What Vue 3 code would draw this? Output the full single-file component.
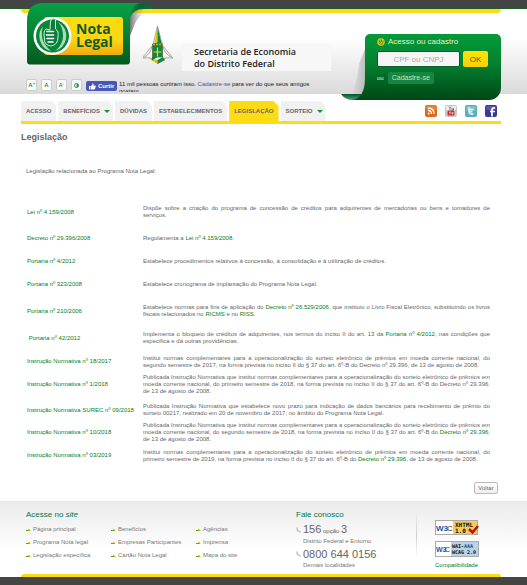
<script setup>
const textTools = [
  { label: 'A⁺', name: 'Aumentar texto' },
  { label: 'A', name: 'Texto normal' },
  { label: 'A⁻', name: 'Diminuir texto', small: true },
]

const tabs = [
  { label: 'ACESSO' },
  { label: 'BENEFÍCIOS', menu: true },
  { label: 'DÚVIDAS' },
  { label: 'ESTABELECIMENTOS' },
  { label: 'LEGISLAÇÃO', active: true },
  { label: 'SORTEIO', menu: true },
]

const t = (text) => ({ text })
const a = (text) => ({ text, link: true })

const rows = [
  { title: 'Lei nº 4.159/2008', size: 'tall', parts: [t('Dispõe sobre a criação do programa de concessão de créditos para adquirentes de mercadorias ou bens e tomadores de serviços.')] },
  { title: 'Decreto nº 29.396/2008', parts: [t('Regulamenta a '), a('Lei nº 4.159/2008.')] },
  { title: 'Portaria nº 4/2012', parts: [t('Estabelece procedimentos relativos à concessão, à consolidação e à utilização de créditos.')] },
  { title: 'Portaria nº 323/2008', parts: [t('Estabelece cronograma de implantação do Programa Nota Legal.')] },
  { title: 'Portaria nº 210/2006', size: 'tall', parts: [t('Estabelece normas para fins de aplicação do '), a('Decreto nº 26.529/2006'), t(', que instituiu o Livro Fiscal Eletrônico, substituindo os livros fiscais relacionados no '), a('RICMS'), t(' e no '), a('RISS.')] },
  { title: '\u00a0Portaria nº 42/2012', size: 'medium', parts: [t('Implementa o bloqueio de créditos de adquirentes, nos termos do inciso II do art. 13 da '), a('Portaria nº 4/2012'), t(', nas condições que especifica e dá outras providências.')] },
  { title: 'Instrução Normativa nº 18/2017', parts: [t('Institui normas complementares para a operacionalização do sorteio eletrônico de prêmios em moeda corrente nacional, do segundo semestre de 2017, na forma prevista no inciso II do § 37 do art. 6º-B do Decreto nº 29.396, de 13 de agosto de 2008.')] },
  { title: 'Instrução Normativa nº 1/2018', parts: [t('Publicada Instrução Normativa que institui normas complementares para a operacionalização do sorteio eletrônico de prêmios em moeda corrente nacional, do primeiro semestre de 2018, na forma prevista no inciso II do § 37 do art. 6º-B do Decreto nº 29.396, de 13 de agosto de 2008.')] },
  { title: 'Instrução Normativa SUREC nº 09/2018', size: 'spaced', parts: [t('Publicada Instrução Normativa que estabelece novo prazo para indicação de dados bancários para recebimento de prêmio do sorteio 00217, realizado em 20 de novembro de 2017, no âmbito do Programa Nota Legal.')] },
  { title: 'Instrução Normativa nº 10/2018', parts: [t('Publicada Instrução Normativa que institui normas complementares para a operacionalização do sorteio eletrônico de prêmios em moeda corrente nacional, do segundo semestre de 2018, na forma prevista no inciso II do § 37 do art. 6º-B do '), a('Decreto nº 29.396'), t(', de 13 de agosto de 2008.')] },
  { title: 'Instrução Normativa nº 03/2019', parts: [t('Institui normas complementares para a operacionalização do sorteio eletrônico de prêmios em moeda corrente nacional, do primeiro semestre de 2019, na forma prevista no inciso II do § 37 do art. 6º-B do '), a('Decreto nº 29.396'), t(', de 13 de agosto de 2008.')] },
]

const siteLinks = [
  'Página principal', 'Benefícios', 'Agências',
  'Programa Nota legal', 'Empresas Participantes', 'Imprensa',
  'Legislação específica', 'Cartão Nota Legal', 'Mapa do site',
]
</script>

<template>
  <div class="page">
    <header class="header">
      <div class="wrap header-inner">
        <div class="stripe"></div>
        <div class="identity">
          <div class="brand-row">
            <a href="#" class="logo" aria-label="Nota Legal">
              <svg width="133" height="62" viewBox="21 3 133 62">
                <defs>
                  <linearGradient id="panel" x1="0" y1="0" x2="0" y2="1">
                    <stop offset="0" stop-color="#06a044" />
                    <stop offset=".45" stop-color="#058538" />
                    <stop offset="1" stop-color="#025a1c" />
                  </linearGradient>
                  <linearGradient id="curl" x1="0" y1="0" x2="1" y2="0">
                    <stop offset="0" stop-color="#0aa04a" />
                    <stop offset=".5" stop-color="#04652f" />
                    <stop offset="1" stop-color="#0b6a40" />
                  </linearGradient>
                  <linearGradient id="gold" x1="0" y1="0" x2="0" y2="1">
                    <stop offset="0" stop-color="#fddc12" />
                    <stop offset=".6" stop-color="#fcd514" />
                    <stop offset="1" stop-color="#f0ab0c" />
                  </linearGradient>
                  <linearGradient id="shade" x1="0" y1="0" x2="1" y2="0">
                    <stop offset="0" stop-color="#555" stop-opacity=".8" />
                    <stop offset="1" stop-color="#bbb" stop-opacity="0" />
                  </linearGradient>
                </defs>
                <path d="M130 36V14Q134 9 146 9L146 13Q138 15 134 26Z" fill="url(#shade)" />
                <path d="M126 3H141Q149 3 153 9H144Q133 9 130 18Z" fill="url(#curl)" />
                <path d="M27 21Q27 3 43 3H141Q131 4 130 18V61Q130 64.500 127 64.500H30Q27 64.500 27 61Z" fill="url(#panel)" />
                <rect x="44" y="17" width="79" height="38" rx="3" fill="url(#gold)" />
                <circle cx="52.500" cy="36" r="19" fill="#fff" />
                <circle cx="52.500" cy="36" r="16.500" fill="#07863a" />
                <path d="M43 26Q36 35 42 45Q45 50 51 51Q43 44 42 37Q41 31 43 26Z" fill="#a9dbb8" />
                <path d="M58 22Q68 28 66 39Q64 48 55 51Q63 45 63 36Q63 27 58 22Z" fill="#a9dbb8" />
                <path d="M50 30L50.500 21Q53 17 55.500 20V29Q59 31 58 37Q58 45 51 46Q44 45 44.500 39Q43 31 46 29Z" fill="#0b7d3b" stroke="#d5eddc" stroke-width="1" />
                <path d="M47 31.500H53.500M46.500 35H53.500M47 38.500H53.500M48 42H53" stroke="#fff" stroke-width="1.600" stroke-linecap="round" />
                <text x="76" y="34" class="logo-text">Nota</text>
                <text x="76" y="47" class="logo-text">Legal</text>
              </svg>
            </a>
            <svg class="crest" width="32" height="38" viewBox="0 0 32 38" aria-hidden="true">
              <path d="M15.500 0L12 19H15.500Z" fill="#e9c512" />
              <path d="M15.500 0L20 19H15.500Z" fill="#0c8a3c" />
              <path d="M15.500 0L11 19M15.500 0L20.500 19" stroke="#888" stroke-width=".7" />
              <path d="M10 20Q9 28 1 32Q8 31 11 33M21 20Q22 28 31 32Q24 31 20 33M10 20L1 31M21 20L30 31" fill="none" stroke="#999" stroke-width=".8" />
              <path d="M10.500 18Q15.500 16 20.500 18V31H10.500Z" fill="#0a8a40" stroke="#5d6b55" stroke-width=".8" />
              <path d="M11 18.500H20.500" stroke="#c9a92c" stroke-width="1.500" stroke-dasharray="2 1" />
              <path d="M15.500 21.500V30.500M11.500 26H19.500" stroke="#f5d722" stroke-width="1.200" />
              <path d="M6 32L15.500 34L15.500 38Z" fill="#e1b918" />
              <path d="M15.500 34L25 32L15.500 38Z" fill="#e1b918" />
              <path d="M10 31H15.500L10 34.500ZM15.500 38V34L21 31L23 34Z" fill="#0a8a40" />
            </svg>
            <div class="department">Secretaria de Economia<br />do Distrito Federal</div>
          </div>
          <div class="tools">
            <button v-for="tool in textTools" :key="tool.name" type="button" class="tool" :class="{ small: tool.small }" :aria-label="tool.name">{{ tool.label }}</button>
            <button type="button" class="tool" aria-label="Contraste">
              <svg width="5" height="5" viewBox="0 0 10 10" aria-hidden="true"><circle cx="5" cy="5" r="4" fill="#fff" stroke="#2b9a50" stroke-width="2" /><path d="M5 1A4 4 0 0 1 5 9Z" fill="#2b9a50" /></svg>
            </button>
            <button type="button" class="like">
              <svg width="7" height="7" viewBox="0 0 14 14" aria-hidden="true"><path d="M0 6H3V13H0ZM4 6L7 3V0Q10 0 9 5H13Q14 7 13 8L12 12Q11 13 9 13H4Z" fill="#fff" /></svg>
              Curtir
            </button>
            <p class="like-text">11 mil pessoas curtiram isso. <a href="#">Cadastre-se</a> para ver do que seus amigos gostam.</p>
          </div>
        </div>
        <div class="login">
          <svg class="login-fold" width="24" height="66" viewBox="0 0 24 66" aria-hidden="true">
            <defs>
              <linearGradient id="foldshade" x1="0" y1="0" x2="1" y2="0">
                <stop offset="0" stop-color="#aaa" stop-opacity="0" />
                <stop offset="1" stop-color="#aaa" stop-opacity=".7" />
              </linearGradient>
              <linearGradient id="foldpanel" gradientUnits="userSpaceOnUse" x1="0" y1="0" x2="0" y2="66">
                <stop offset="0" stop-color="#039a3a" />
                <stop offset=".45" stop-color="#03812f" />
                <stop offset="1" stop-color="#004717" />
              </linearGradient>
              <linearGradient id="foldback" x1="0" y1="0" x2="0" y2="1">
                <stop offset="0" stop-color="#02542c" />
                <stop offset="1" stop-color="#4fa173" />
              </linearGradient>
            </defs>
            <path d="M24 15V60H10Q16 50 18 30Z" fill="url(#foldshade)" />
            <path d="M0 60H20V66H12Q4 66 0 60Z" fill="url(#foldback)" />
            <path d="M24 44V66H11Q24 64 24 44Z" fill="url(#foldpanel)" />
          </svg>
          <form class="login-panel" @submit.prevent>
            <label for="cpf" class="login-title">
              <svg width="8" height="8" viewBox="0 0 16 16" aria-hidden="true"><circle cx="8" cy="8" r="7.500" fill="#d8cc1a" /><path d="M4 5Q3 9 7 13M6 3V8L9 11M9 3V8M12 5V9Q12 12 9 13" fill="none" stroke="#44731a" stroke-width="1.500" /></svg>
              Acesso ou cadastro
            </label>
            <div class="login-row">
              <input id="cpf" type="text" placeholder="CPF ou CNPJ" />
              <button type="submit" class="ok">OK</button>
            </div>
            <div class="register-row">ou <a href="#" class="register">Cadastre-se</a></div>
          </form>
        </div>
      </div>
    </header>

    <div class="wrap nav-row">
      <nav class="tabs">
        <a v-for="tab in tabs" :key="tab.label" href="#" class="tab" :class="{ active: tab.active, menu: tab.menu }">
          {{ tab.label }}<span v-if="tab.menu" class="caret"></span>
        </a>
      </nav>
      <div class="social">
        <a href="#" aria-label="RSS">
          <svg width="12" height="12" viewBox="0 0 12 12"><rect width="12" height="12" rx="2" fill="#df6916" /><rect x=".5" y=".5" width="11" height="5" rx="2" fill="#ee9554" opacity=".6" /><circle cx="3.700" cy="8.500" r="1" fill="#fff" /><path d="M3 5.500Q6.500 5.500 6.500 9M3 3Q9 3 9 9" fill="none" stroke="#fff" stroke-width="1.300" /></svg>
        </a>
        <a href="#" aria-label="YouTube">
          <svg width="12" height="12" viewBox="0 0 12 12"><rect width="12" height="12" rx="2" fill="#c9c9c9" /><rect x="1" y="1" width="10" height="4" rx="1" fill="#eee" /><path d="M4 1.500L5 3V5M6 1.500L5 3M7 3V5H8.500V3" fill="none" stroke="#555" stroke-width=".7" /><rect x="2.500" y="5.500" width="7" height="5" rx="1.500" fill="#cc2630" /><path d="M4 7H6M5 7V9.500M7 7V9H8V7" fill="none" stroke="#fff" stroke-width=".6" /></svg>
        </a>
        <a href="#" aria-label="Twitter">
          <svg width="12" height="12" viewBox="0 0 12 12"><rect width="12" height="12" rx="2" fill="#58aeb9" /><rect x="1" y="1" width="10" height="5" rx="2" fill="#8ccdd4" opacity=".6" /><path d="M4 2.500V7.500Q4 9 6 9H8M4 4.500H8M4 6.800H7" fill="none" stroke="#fff" stroke-width="1.300" stroke-linecap="round" /></svg>
        </a>
        <a href="#" aria-label="Facebook">
          <svg width="12" height="12" viewBox="0 0 12 12"><rect width="12" height="12" rx="2" fill="#3d3990" /><rect x="1" y="1" width="10" height="4" rx="2" fill="#6f6cb4" opacity=".6" /><path d="M7 11.500V5Q7 2.500 10 3M5 6.500H10" fill="none" stroke="#fff" stroke-width="1.700" /></svg>
        </a>
      </div>
    </div>

    <main class="wrap">
      <h1>Legislação</h1>
      <p class="intro">Legislação relacionada ao Programa Nota Legal:</p>
      <table class="laws">
        <tbody>
          <tr v-for="row in rows" :key="row.title" :class="row.size">
            <th scope="row"><a href="#">{{ row.title }}</a></th>
            <td><template v-for="(part, i) in row.parts" :key="i"><a v-if="part.link" href="#">{{ part.text }}</a><template v-else>{{ part.text }}</template></template></td>
          </tr>
        </tbody>
      </table>
      <div class="back"><button type="button">Voltar</button></div>
    </main>

    <footer class="footer">
      <div class="wrap footer-inner">
        <section class="site">
          <h2>Acesse no <em>site</em></h2>
          <ul>
            <li v-for="link in siteLinks" :key="link">
              <svg width="5" height="4" viewBox="0 0 5 4" aria-hidden="true"><path d="M0 2.500H4" stroke="#4ea32a" /><path d="M2 0.500L5 2.500H2Z" fill="#d5c400" /></svg>
              <a href="#">{{ link }}</a>
            </li>
          </ul>
        </section>
        <section class="contact">
          <h2>Fale conosco</h2>
          <dl>
            <dt><svg width="5" height="6" viewBox="0 0 5 6" aria-hidden="true"><path d="M1 0.500Q0.500 4 4.500 5" fill="none" stroke="#bbb" stroke-width="1.300" /></svg><span>156<small> opção </small>3</span></dt>
            <dd>Distrito Federal e Entorno</dd>
            <dt><svg width="5" height="6" viewBox="0 0 5 6" aria-hidden="true"><path d="M1 0.500Q0.500 4 4.500 5" fill="none" stroke="#bbb" stroke-width="1.300" /></svg>0800 644 0156</dt>
            <dd>Demais localidades</dd>
          </dl>
        </section>
        <div class="divider"></div>
        <section class="badges">
          <a href="#" aria-label="W3C XHTML 1.0">
            <svg width="45" height="16" viewBox="0 0 45 16">
              <rect x=".5" y=".5" width="42" height="14" fill="#fff" stroke="#aaa" />
              <rect x="18" y="1" width="24" height="13" fill="#f9cb55" />
              <text x="1" y="11" class="w3">W3</text><text x="12" y="11" class="w3 dark">C</text>
              <text x="20" y="7" class="spec">XHTML</text>
              <text x="20" y="13" class="spec">1.0</text>
              <path d="M34 9L37.500 12.500L43 6" fill="none" stroke="#b81616" stroke-width="2.500" />
            </svg>
          </a>
          <a href="#" aria-label="W3C WAI-AAA WCAG 2.0">
            <svg width="45" height="16" viewBox="0 0 45 16">
              <rect x=".5" y=".5" width="43" height="15" fill="#fff" stroke="#aaa" />
              <rect x="16" y="1" width="27" height="14" fill="#b8d3e6" />
              <text x="1" y="11" class="w3 narrow">W3</text><text x="10" y="11" class="w3 narrow dark">C</text>
              <text x="17" y="7" class="spec narrow">WAI-<tspan fill="#124b93">AAA</tspan></text>
              <text x="17" y="13" class="spec narrow">WCAG 2.0</text>
            </svg>
          </a>
          <a href="#" class="compat">Compatibilidade</a>
        </section>
      </div>
      <div class="wrap"><div class="bottom-stripe"></div></div>
      <div class="bottom-bar"></div>
    </footer>
  </div>
</template>

<style>
body {
  margin: 0;
  background: #fff;
}
</style>

<style scoped>
.page {
  font: 6px/7px "Liberation Sans", Arial, sans-serif;
  color: #666;
}
.wrap {
  padding: 0 26px 0 21px;
}
a {
  color: #00801a;
  text-decoration: none;
}
button,
input {
  font-family: inherit;
  box-sizing: border-box;
}
h1, h2, p, ul, dl, dd {
  margin: 0;
  padding: 0;
}
svg {
  display: block;
  flex: none;
}

.header {
  background:
    linear-gradient(#444 0 8px, #1c5c26 8px 9px, transparent 9px) 0 0 / 100% 9px no-repeat,
    linear-gradient(#fff 0 40%, #dadada) 0 0 / 100% 94px no-repeat;
}
.header-inner {
  position: relative;
  display: flex;
  justify-content: space-between;
}
.stripe {
  position: absolute;
  top: 9px;
  left: 21px;
  right: 26px;
  height: 4px;
  background: #fddc14;
  border-radius: 0 0 4px 4px;
}
.identity {
  position: relative;
  padding-top: 3px;
}
.brand-row {
  display: flex;
}
.logo-text {
  font: 700 14px "Open Sans", sans-serif;
  fill: #115b24;
}
.crest {
  margin: 23px 0 0 -12px;
}
.department {
  box-sizing: border-box;
  width: 149px;
  height: 27px;
  margin: 41px 0 0 8px;
  padding: 2px 12px;
  background: #f7f7f7;
  color: #222;
  font: 600 9px/12px "Open Sans", sans-serif;
  white-space: nowrap;
}
.tools {
  display: flex;
  gap: 4px;
  padding: 8px 0 0 5px;
}
.tool {
  display: flex;
  align-items: center;
  justify-content: center;
  width: 11px;
  height: 12px;
  padding: 0;
  border: 1px solid #ccc;
  border-radius: 2px;
  background: #fafafa;
  color: #2b9a50;
  font-size: 6px;
  font-weight: bold;
  line-height: 8px;
}
.tool.small {
  font-size: 5px;
}
.like {
  display: flex;
  align-items: center;
  gap: 2px;
  width: 31px;
  height: 10px;
  margin-top: 2px;
  padding: 0 3px;
  border: 0;
  border-radius: 2px;
  background: #4a55b5;
  color: #fff;
  font-size: 6px;
  font-weight: bold;
  line-height: 8px;
}
.like-text {
  box-sizing: border-box;
  width: 200px;
  height: 13px;
  margin-left: -2px;
  padding-top: 2px;
  overflow: hidden;
  color: #222;
}
.like-text a {
  color: #4a52a8;
}

.login {
  display: flex;
  position: relative;
  margin-top: 34px;
  padding-bottom: 1px;
}
.login-panel {
  box-sizing: border-box;
  width: 136px;
  height: 66px;
  padding: 3px 12px 0;
  border-radius: 5px 5px 12px 0;
  background: linear-gradient(#039a3a, #03812f 45%, #004717);
}
.login-title {
  display: flex;
  align-items: center;
  gap: 3px;
  height: 9px;
  color: #e3f1c8;
  font-size: 8px;
}
.login-row {
  display: flex;
  gap: 3px;
  margin-top: 5px;
}
.login input {
  width: 83px;
  height: 16px;
  padding: 0 2px;
  border: 1px solid #0a5b26;
  border-radius: 2px;
  background: #f5f5f5;
  font-size: 8px;
  text-align: center;
}
.login input::placeholder {
  color: #aaa;
}
.ok {
  width: 25px;
  height: 16px;
  padding: 0;
  border: 0;
  border-radius: 2px;
  background: linear-gradient(#fde400, #fbce0a);
  color: #3d6b13;
  font-size: 8px;
}
.register-row {
  display: flex;
  align-items: center;
  gap: 4px;
  margin-top: 5px;
  color: #e0f0e0;
}
.register {
  padding: 2px 4px;
  border-radius: 2px;
  background: #178545;
  color: #c3e9a9;
  font-size: 7px;
  line-height: 8px;
}

.nav-row {
  display: flex;
  justify-content: space-between;
  background: linear-gradient(#fddc14, #fddc14) 21px 100% / calc(100% - 47px) 3px no-repeat;
  padding-bottom: 3px;
}
.tabs {
  display: flex;
  gap: 2px;
}
.tab {
  display: flex;
  align-items: center;
  gap: 4px;
  height: 20px;
  padding: 0 5px;
  background: #f1f1f1;
  clip-path: polygon(0 0, calc(100% - 5px) 0, 100% 5px, 100% 100%, 0 100%);
  color: #666;
  font-weight: bold;
}
.tab.menu {
  padding-right: 3px;
}
.tab.active {
  background: #fddc14;
}
.caret {
  border: 3px solid transparent;
  border-top-color: #0e9a2e;
  border-bottom: 0;
}
.social {
  display: flex;
  gap: 8px;
  padding: 4px 4px 0 0;
}

h1 {
  padding-top: 8px;
  font-size: 9px;
  line-height: 10px;
}
.intro {
  padding: 26px 5px 22px;
}
.laws {
  width: 100%;
  border-collapse: collapse;
}
.laws th,
.laws td {
  height: 23px;
  padding: 0;
  vertical-align: middle;
}
.laws th {
  width: 116px;
  padding-left: 6px;
  box-sizing: content-box;
  font-weight: normal;
  text-align: left;
  white-space: nowrap;
}
.laws td {
  padding-right: 11px;
  text-align: justify;
}
.laws .tall > * {
  height: 30px;
}
.laws .medium > * {
  height: 24px;
}
.laws .spaced > * {
  height: 22px;
  padding-top: 3px;
}
.back {
  display: flex;
  justify-content: flex-end;
  padding: 15px 3px 7px;
}
.back button {
  width: 24px;
  height: 12px;
  padding: 0;
  border: 1px solid #bbb;
  border-radius: 2px;
  background: linear-gradient(#fff, #eee);
  color: #666;
  font-size: 6px;
  line-height: 8px;
}

.footer {
  background: linear-gradient(#eaeaea, #fff 48px);
}
.footer-inner {
  display: flex;
}
.footer h2 {
  color: #00774a;
  font-size: 8px;
  font-weight: normal;
  line-height: 9px;
}
.site {
  width: 270px;
  padding: 9px 0 12px 5px;
}
.site ul {
  display: grid;
  grid-template-columns: repeat(3, 85px);
  margin-top: 4px;
  list-style: none;
}
.site li {
  display: flex;
  align-items: center;
  gap: 2px;
  height: 13px;
}
.site li a,
.contact dd {
  color: #777;
}
.contact {
  width: 120px;
  padding-top: 9px;
}
.contact dl {
  margin-top: 4px;
}
.contact dt {
  display: flex;
  align-items: center;
  gap: 2px;
  height: 14px;
  font-size: 11px;
  line-height: 14px;
}
.contact dt small {
  font-size: 6px;
}
.contact dd {
  height: 10px;
  padding: 1px 0 0 7px;
  box-sizing: border-box;
}
.divider {
  width: 1px;
  height: 48px;
  margin-top: 10px;
  background: linear-gradient(transparent, #ccc, transparent);
}
.badges {
  display: flex;
  flex-direction: column;
  gap: 5px;
  padding: 19px 0 0 18px;
}
.w3 {
  font: 700 8px "Liberation Sans", sans-serif;
  fill: #1c5aa6;
}
.w3.narrow {
  font-size: 7px;
}
.w3.dark {
  font-weight: 400;
  fill: #333;
}
.spec {
  font: 700 6px "DejaVu Sans Mono", monospace;
  fill: #111;
}
.spec.narrow {
  font-size: 5px;
}
.bottom-stripe {
  height: 3px;
  background: #fddc14;
  border-radius: 4px 4px 0 0;
}
.bottom-bar {
  height: 8px;
  background: #444;
}
</style>
